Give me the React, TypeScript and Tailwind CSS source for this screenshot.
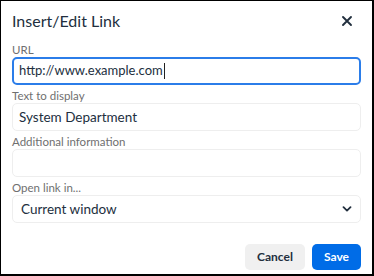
import React from 'react';

function Field({ label, children }: { label: string; children: React.ReactNode }) {
  return (
    <div className="flex flex-col">
      <label className="h-[16px] pt-[2px] text-[11.5px] leading-[13px] text-[#6f6f6f]">{label}</label>
      {children}
    </div>
  );
}

export default function App() {
  return (
    <div
      className="w-[374px] h-[276px] bg-white border-t border-l border-r-2 border-b-2 border-black flex flex-col font-['Lato',sans-serif]"
    >
      {/* Header */}
      <div className="h-[40px] flex items-center justify-between pl-[11px] pr-[18px] pb-[1px]">
        <h1 className="text-[16px] text-[#222f3e]">Insert/Edit Link</h1>
        <button className="w-[14px] h-[14px] flex items-center justify-center text-[#222f3e]">
          <svg width="12" height="12" viewBox="0 0 12 12" fill="none" stroke="currentColor" strokeWidth="1.9" strokeLinecap="round">
            <path d="M2 2 L10 10 M10 2 L2 10" />
          </svg>
        </button>
      </div>

      {/* Body */}
      <div className="flex flex-col gap-[2px] px-[11px]">
        <Field label="URL">
          <div className="h-[28px] rounded-[5px] border-2 border-[#2b7de9] flex items-center px-[5px] text-[13px] text-[#222f3e]">
            http://www.example.com<span className="w-px h-[16px] bg-[#222] ml-px" />
          </div>
        </Field>
        <Field label="Text to display">
          <div className="h-[28px] rounded-[5px] border border-[#eeeeee] flex items-center px-[6px] text-[13.5px] text-[#222f3e]">
            System Department
          </div>
        </Field>
        <Field label="Additional information">
          <div className="h-[28px] rounded-[5px] border border-[#eeeeee]" />
        </Field>
        <Field label="Open link in...">
          <div className="h-[28px] rounded-[5px] border border-[#eeeeee] flex items-center justify-between pl-[8px] pr-[8px] text-[13.5px] text-[#222f3e]">
            <span>Current window</span>
            <svg width="10" height="6" viewBox="0 0 10 6" fill="none" stroke="currentColor" strokeWidth="1.8" strokeLinecap="round" strokeLinejoin="round">
              <path d="M1.5 1.2 L5 4.6 L8.5 1.2" />
            </svg>
          </div>
        </Field>
      </div>

      {/* Footer */}
      <div className="flex justify-end gap-[7px] px-[11px] mt-[21px]">
        <button className="h-[26px] w-[60px] rounded-[5px] bg-[#f0f0f0] text-[12px] font-bold text-[#222f3e]">
          Cancel
        </button>
        <button className="h-[26px] w-[49px] rounded-[5px] bg-[#006ce7] text-[12px] font-bold text-white">
          Save
        </button>
      </div>
    </div>
  );
}
